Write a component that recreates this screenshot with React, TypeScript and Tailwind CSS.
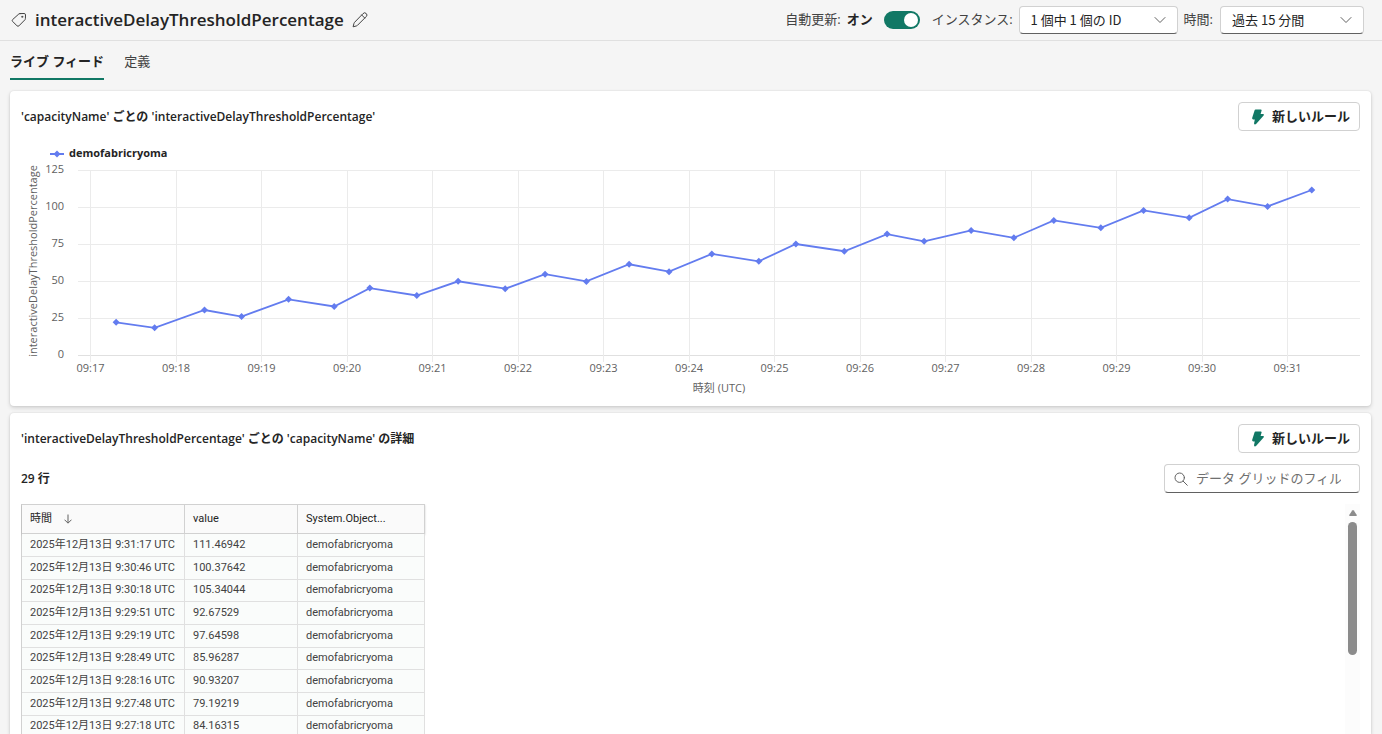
import React, { useState } from 'react';

type Sample = { t: number; value: number };

// t = seconds since 09:17:00 UTC
const samples: Sample[] = [
  { t: 18, value: 22.1 },
  { t: 45, value: 18.4 },
  { t: 80, value: 30.4 },
  { t: 106, value: 26 },
  { t: 139, value: 37.6 },
  { t: 171, value: 32.8 },
  { t: 196, value: 45.2 },
  { t: 229, value: 40.2 },
  { t: 258, value: 49.8 },
  { t: 291, value: 44.8 },
  { t: 319, value: 54.6 },
  { t: 348, value: 49.7 },
  { t: 378, value: 61.3 },
  { t: 406, value: 56.3 },
  { t: 436, value: 68.3 },
  { t: 469, value: 63.3 },
  { t: 495, value: 75 },
  { t: 529, value: 70.1 },
  { t: 559, value: 81.7 },
  { t: 585, value: 76.8 },
  { t: 618, value: 84.16315 },
  { t: 648, value: 79.19219 },
  { t: 676, value: 90.93207 },
  { t: 709, value: 85.96287 },
  { t: 739, value: 97.64598 },
  { t: 771, value: 92.67529 },
  { t: 798, value: 105.34044 },
  { t: 826, value: 100.37642 },
  { t: 857, value: 111.46942 },
];

const VISIBLE_ROWS = 9;
const SERIES = 'demofabricryoma';
const METRIC = 'interactiveDelayThresholdPercentage';

const formatTime = (t: number) => {
  const min = 17 + Math.floor(t / 60);
  const sec = String(t % 60).padStart(2, '0');
  return `2025年12月13日 9:${min}:${sec} UTC`;
};

function TagIcon() {
  return (
    <svg className="h-4 w-4 shrink-0" viewBox="0 0 16 16" fill="none" stroke="#424242" strokeLinejoin="round" strokeLinecap="round">
      <path d="M9 1.6 13.1 1.5Q14.5 1.5 14.5 2.9L14.4 6.6Q14.4 7.3 13.9 7.8L7.9 13.9Q7 14.7 6.1 13.9L1.6 9.4Q.8 8.5 1.6 7.6L7.8 2Q8.3 1.6 9 1.6Z" />
      <circle cx="11.2" cy="4.8" r="0.7" fill="#424242" strokeWidth="0.5" />
    </svg>
  );
}

function EditIcon() {
  return (
    <svg className="h-4 w-4" viewBox="0 0 16 16" fill="none" stroke="#424242" strokeLinejoin="round" strokeLinecap="round">
      <path d="M11.1 1.5a2.1 2.1 0 0 1 3.1 0 2.1 2.1 0 0 1 0 3.1L5.4 13.4Q5 13.8 4.5 13.9L1.1 14.8 2 11.3Q2.1 10.8 2.5 10.4ZM9.7 3l3 3" />
    </svg>
  );
}

function BoltIcon() {
  return (
    <svg className="h-4 w-4" viewBox="0 0 16 16" fill="#117865">
      <path d="M4.5 1.5Q4.8.5 5.6.5H10.8Q11.8.5 11.6 1.4L10.6 5H13Q14.5 5.2 13.6 6.4L6.3 14.8Q4.4 16.2 4 14.2L4.8 10.5H3.2Q1.8 10.2 2.2 8.8Z" />
    </svg>
  );
}

function Chevron() {
  return (
    <svg className="pointer-events-none absolute right-3 top-2 h-3 w-3" viewBox="0 0 12 12" fill="none" stroke="#616161" strokeLinecap="round">
      <path d="M1 3.5 6 8.5 11 3.5" />
    </svg>
  );
}

function Dropdown({ id, value, className }: { id: string; value: string; className: string }) {
  return (
    <div className={`relative ${className}`}>
      <select
        id={id}
        className="h-7 w-full appearance-none rounded border border-[#d1d1d1] border-b-[#616161] bg-white px-[11px] font-['Noto_Sans_CJK_JP',sans-serif] text-[13px] text-[#242424]"
      >
        <option>{value}</option>
      </select>
      <Chevron />
    </div>
  );
}

function NewRuleButton() {
  return (
    <button className="flex h-[29px] items-center gap-1.5 rounded border border-[#d1d1d1] bg-white pl-[11px] pr-[9px] text-[13px] font-semibold text-[#242424]">
      <BoltIcon />
      新しいルール
    </button>
  );
}

const LEFT = 69.5;
const BASE = 215;
const STEP = 85.5;
const toX = (t: number) => LEFT + (t / 60) * STEP;
const toY = (v: number) => BASE - v * 1.48;

function Diamond({ x, y }: { x: number; y: number }) {
  return <path d={`M${x - 3.5} ${y}L${x} ${y - 3.5}L${x + 3.5} ${y}L${x} ${y + 3.5}Z`} fill="#637cef" />;
}

function LineChart() {
  const ticks = [0, 25, 50, 75, 100, 125];
  const minutes = Array.from({ length: 15 }, (_, i) => i);

  return (
    <svg viewBox="0 0 1339 255" className="mt-[9px] block w-full text-[11px]" role="img" aria-label={METRIC}>
      <path d="M29 14H43" stroke="#637cef" strokeWidth="2" />
      <Diamond x={36} y={14} />
      <text x="48" y="17" className="fill-[#242424] text-[11px] font-bold">{SERIES}</text>

      {ticks.map((v) => (
        <g key={v}>
          <path d={`M57 ${Math.round(toY(v))}.5H1339`} stroke={v === 0 ? '#e0e0e0' : '#ebebeb'} />
          <text x="43" y={Math.round(toY(v)) + 3} textAnchor="end" className="fill-[#616161]">{v}</text>
        </g>
      ))}
      {minutes.map((m) => (
        <g key={m}>
          <path d={`M${Math.floor(LEFT + m * STEP)}.5 30V222`} stroke="#ebebeb" />
          <text x={LEFT + m * STEP} y="232" textAnchor="middle" className="fill-[#616161]">09:{17 + m}</text>
        </g>
      ))}

      <text x="698" y="252" textAnchor="middle" className="fill-[#616161]">時刻 (UTC)</text>
      <text transform="translate(16 121) rotate(-90)" textAnchor="middle" className="fill-[#616161]">{METRIC}</text>

      <polyline
        points={samples.map((s) => `${toX(s.t)},${toY(s.value)}`).join(' ')}
        fill="none"
        stroke="#637cef"
        strokeWidth="1.8"
      />
      {samples.map((s) => (
        <Diamond key={s.t} x={toX(s.t)} y={toY(s.value)} />
      ))}
    </svg>
  );
}

function DetailsTable() {
  const rows = [...samples].reverse().slice(0, VISIBLE_ROWS);

  return (
    <table className="w-[404px] table-fixed border-separate border-spacing-0 border-l border-[#d1d1d1] text-left font-[Roboto,'Noto_Sans_CJK_JP',sans-serif] text-[11px] text-[#424242]">
      <thead>
        <tr className="h-[30px] bg-[#fafafa] text-[#242424] shadow-[0_1px_2px_rgba(0,0,0,0.2)]">
          <th className="w-[163px] border-y border-r border-[#d1d1d1] px-2 font-normal">
            <span className="flex items-center gap-3">
              時間
              <svg className="h-[10px] w-2" viewBox="0 0 8 10" fill="none" stroke="#616161">
                <path d="M4 .5V9M.5 5.7 4 9.2 7.5 5.7" />
              </svg>
            </span>
          </th>
          <th className="w-[113px] border-y border-r border-[#d1d1d1] px-2 font-normal">value</th>
          <th className="border-y border-r border-[#d1d1d1] px-2 font-normal">System.Object...</th>
        </tr>
      </thead>
      <tbody>
        {rows.map((row) => (
          <tr key={row.t} className="h-[23px] bg-[#fafcfb] nth-[3n]:h-[22px]">
            <td className="whitespace-nowrap border-b border-r border-[#e0e0e0] px-2">{formatTime(row.t)}</td>
            <td className="border-b border-r border-[#e0e0e0] px-2">{row.value.toFixed(5)}</td>
            <td className="border-b border-r border-[#e0e0e0] px-2">{SERIES}</td>
          </tr>
        ))}
      </tbody>
    </table>
  );
}

export default function App() {
  const [autoRefresh, setAutoRefresh] = useState(true);

  return (
    <div className="flex h-screen flex-col overflow-hidden bg-[#f5f5f5] font-['Open_Sans','Noto_Sans_CJK_JP',sans-serif] text-[#242424]">
      <header className="flex h-[41px] shrink-0 items-center justify-between border-b border-[#e0e0e0] pl-[11px] pr-[18px]">
        <div className="flex items-center">
          <TagIcon />
          <h1 className="ml-2 text-[17px] font-semibold">{METRIC}</h1>
          <button className="ml-2" aria-label="編集">
            <EditIcon />
          </button>
        </div>
        <div className="flex items-center text-[13px] text-[#424242]">
          <label htmlFor="auto-refresh">自動更新:</label>
          <span className="ml-1.5 font-semibold text-[#242424]">{autoRefresh ? 'オン' : 'オフ'}</span>
          <input
            id="auto-refresh"
            type="checkbox"
            role="switch"
            checked={autoRefresh}
            onChange={(e) => setAutoRefresh(e.target.checked)}
            className="ml-[11px] flex h-[18px] w-9 appearance-none items-center rounded-full bg-[#8a8a8a] px-0.5 before:block before:h-3.5 before:w-3.5 before:rounded-full before:bg-white checked:justify-end checked:bg-[#117865]"
          />
          <label htmlFor="instance" className="ml-3">インスタンス:</label>
          <Dropdown id="instance" value="1 個中 1 個の ID" className="ml-1.5 w-[159px]" />
          <label htmlFor="range" className="ml-1.5">時間:</label>
          <Dropdown id="range" value="過去 15 分間" className="ml-[7px] w-36" />
        </div>
      </header>

      <nav className="flex h-[39px] shrink-0 gap-5 pl-2.5 text-[13px]">
        <button className="border-b-2 border-[#117865] pt-1 font-semibold">ライブ フィード</button>
        <button className="border-b-2 border-transparent pt-1 text-[#424242]">定義</button>
      </nav>

      <main className="mt-[11px] flex min-h-0 flex-1 flex-col gap-[7px] pl-2.5 pr-[11px]">
        <section className="shrink-0 rounded bg-white p-[11px] shadow-[0_0_2px_rgba(0,0,0,0.12),0_2px_4px_rgba(0,0,0,0.14)]">
          <div className="flex items-center justify-between">
            <h2 className="text-[12px] font-semibold">'capacityName' ごとの '{METRIC}'</h2>
            <NewRuleButton />
          </div>
          <LineChart />
        </section>

        <section className="flex min-h-0 flex-1 flex-col rounded-t bg-white px-[11px] pt-[11px] shadow-[0_0_2px_rgba(0,0,0,0.12),0_2px_4px_rgba(0,0,0,0.14)]">
          <div className="flex items-center justify-between">
            <h2 className="text-[12px] font-semibold">'{METRIC}' ごとの 'capacityName' の詳細</h2>
            <NewRuleButton />
          </div>
          <div className="mt-[11px] flex items-center justify-between">
            <p className="text-[12px] font-semibold">{samples.length} 行</p>
            <div className="flex h-[29px] w-[196px] items-center gap-2 rounded border border-[#d1d1d1] border-b-[#616161] bg-white pl-[9px] pr-[18px]">
              <svg className="h-3.5 w-3.5 shrink-0" viewBox="0 0 14 14" fill="none" stroke="#616161" strokeLinecap="round">
                <circle cx="5.7" cy="5.7" r="4.7" />
                <path d="M9.2 9.2 13.3 13.3" />
              </svg>
              <input
                type="text"
                aria-label="フィルター"
                placeholder="データ グリッドのフィルター"
                className="min-w-0 flex-1 text-[13px] outline-none placeholder:text-[#707070]"
              />
            </div>
          </div>
          <div className="mt-[11px] flex min-h-0 flex-1 justify-between overflow-hidden">
            <DetailsTable />
            <div className="flex w-[15px] flex-col items-center bg-[#fcfcfc] pt-1.5">
              <svg className="h-1.5 w-2" viewBox="0 0 8 6" fill="#8b8b8b">
                <path d="M3.2.6Q4-.4 4.8.6L7.8 5Q8 6 7.2 6H.8Q0 6 .2 5Z" />
              </svg>
              <div className="mt-1.5 h-[133px] w-[9px] rounded-full bg-[#8b8b8b]" />
            </div>
          </div>
        </section>
      </main>
    </div>
  );
}
